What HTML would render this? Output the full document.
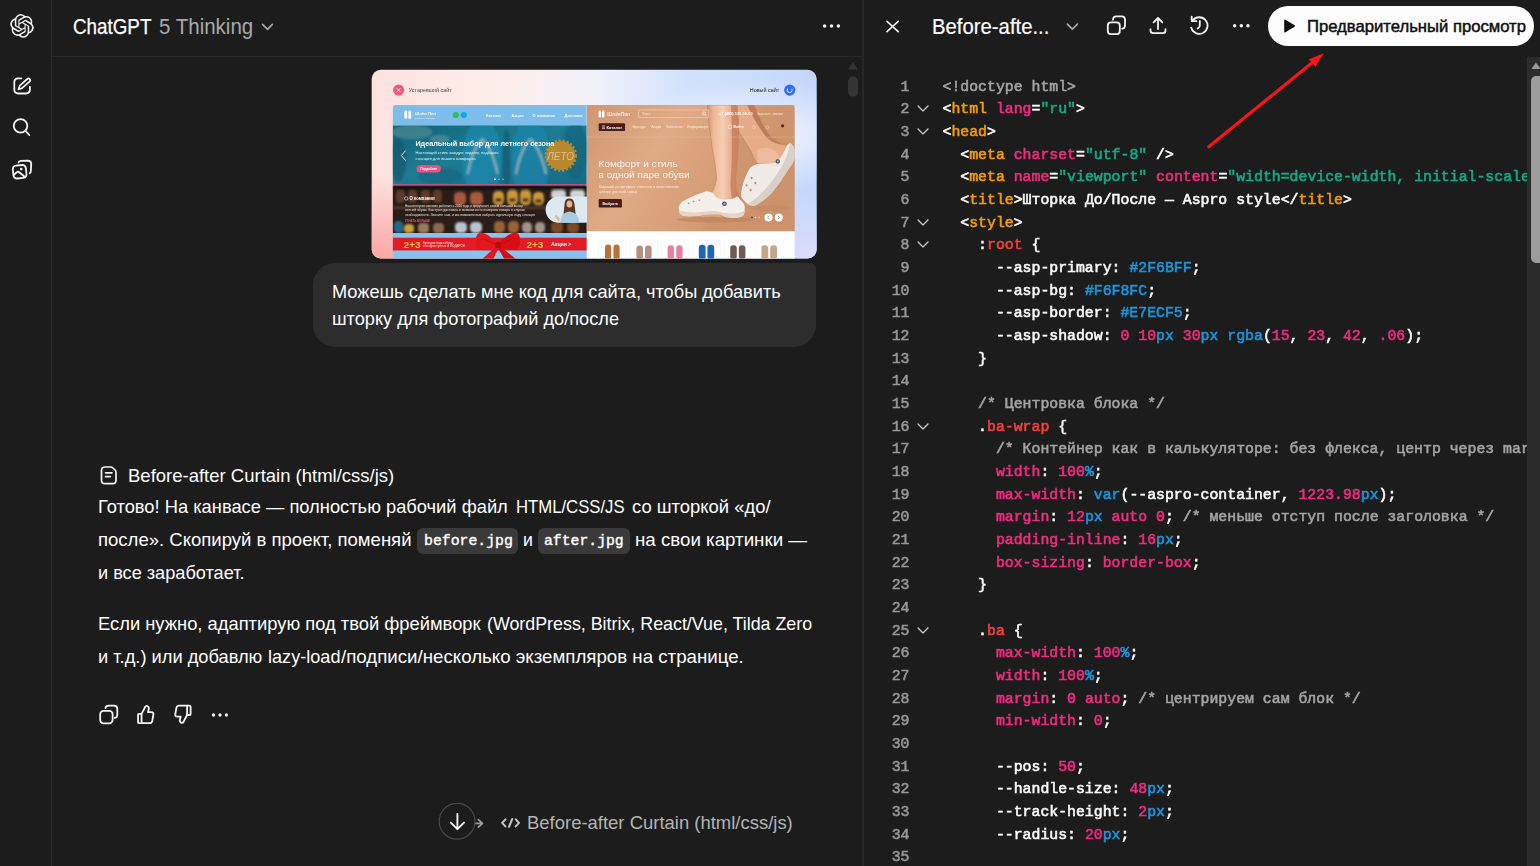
<!DOCTYPE html>
<html lang="ru">
<head>
<meta charset="utf-8">
<title>ChatGPT — Before-after Curtain</title>
<style>
*{box-sizing:border-box;margin:0;padding:0}
html,body{width:1540px;height:866px;overflow:hidden;background:#1c1c1c}
body{position:relative;font-family:"Liberation Sans",sans-serif;color:#fff;-webkit-font-smoothing:antialiased}
.abs{position:absolute}
.t{position:absolute;white-space:nowrap;line-height:1;transform-origin:0 0}
svg{position:absolute;overflow:visible}
.ico path,.ico rect,.ico circle,.ico line,.ico polyline{fill:none;stroke:#f3f3f3;stroke-width:1.9;stroke-linecap:round;stroke-linejoin:round}
/* layout lines */
#sideline{left:51px;top:0;width:1px;height:866px;background:#2b2b2b}
#headline{left:52px;top:56px;width:810px;height:1px;background:#282828}
#midline{left:862px;top:0;width:2px;height:866px;background:#272727}
/* bubble */
#bubble{left:312.7px;top:263.4px;width:503.7px;height:83.6px;border-radius:22px 6px 22px 22px;background:#2d2d2d}
/* code */
.cl{position:absolute;left:863px;width:664px;height:23px;overflow:hidden;white-space:pre;font-family:"Liberation Mono",monospace;font-size:14.83px;line-height:23px;font-weight:400;-webkit-text-stroke:0.58px currentColor;color:#f2f2f2}
.ln{position:absolute;left:0;width:46.5px;text-align:right;color:#969696}
.ct{position:absolute;left:79.5px}
.fold{left:53.6px;top:7.2px;width:12px;height:7px}
.fold path{fill:none;stroke:#c6c6c6;stroke-width:1.6;stroke-linecap:round;stroke-linejoin:round}
.w{color:#fafafa}.g{color:#a3a3a3}.a{color:#f02c7e}.s{color:#16ab87}.n{color:#f02c7e}.u{color:#1b96dc}.r{color:#f4403e}
.tg{color:#f49b08}
/* inline code chips */
.chip{position:absolute;height:25.5px;border-radius:6px;background:#3a3a3a}
#pbtn{left:1268px;top:5.5px;width:265.5px;height:40.5px;border-radius:21px;background:#fdfdfd}
.mono{font-family:"Liberation Mono",monospace;font-weight:400;-webkit-text-stroke:0.4px currentColor}
</style>
</head>
<body>

<!-- separators -->
<div class="abs" id="sideline"></div>
<div class="abs" id="headline"></div>
<div class="abs" id="midline"></div>

<!-- thumbnail -->
<svg id="shot" style="left:0;top:0;width:1540px;height:866px" viewBox="0 0 1540 866" font-family="Liberation Sans, sans-serif">
<defs>
  <clipPath id="shotclip"><rect x="371.7" y="69.8" width="445" height="188.7" rx="9"/></clipPath>
  <clipPath id="oldclip"><path d="M392.6 108 Q392.6 105 395.6 105 H586.8 V258.5 H392.6 Z"/></clipPath>
  <clipPath id="banclip"><rect x="392.6" y="125.6" width="194.2" height="58.6"/></clipPath>
  <clipPath id="newclip"><path d="M586.8 105 H791.8 Q794.8 105 794.8 108 V258.5 H586.8 Z"/></clipPath>
  <linearGradient id="bgG" x1="0" y1="0" x2="1" y2="0">
    <stop offset="0" stop-color="#fde2de"/><stop offset="0.28" stop-color="#fdeeea"/><stop offset="0.5" stop-color="#f1f1fa"/><stop offset="0.7" stop-color="#d2e2fc"/><stop offset="1" stop-color="#c3d6fb"/>
  </linearGradient>
  <radialGradient id="bgP" cx="0.02" cy="1" r="0.45"><stop offset="0" stop-color="#fba5a5"/><stop offset="1" stop-color="#fba5a5" stop-opacity="0"/></radialGradient>
  <radialGradient id="bgW" cx="0.86" cy="0.35" r="0.3"><stop offset="0" stop-color="#f3f6ff"/><stop offset="1" stop-color="#f3f6ff" stop-opacity="0"/></radialGradient>
  <radialGradient id="bgL" cx="1" cy="1" r="0.35"><stop offset="0" stop-color="#dcdcfc"/><stop offset="1" stop-color="#dcdcfc" stop-opacity="0"/></radialGradient>
  <linearGradient id="tealG" x1="0" y1="0" x2="1" y2="1">
    <stop offset="0" stop-color="#15647b"/><stop offset="0.45" stop-color="#1c7b93"/><stop offset="1" stop-color="#156a82"/>
  </linearGradient>
  <linearGradient id="heroG" x1="0" y1="0" x2="1" y2="0.4">
    <stop offset="0" stop-color="#d09670"/><stop offset="0.4" stop-color="#dfaa85"/><stop offset="0.75" stop-color="#d59d77"/><stop offset="1" stop-color="#cf9670"/>
  </linearGradient>
  <linearGradient id="legG" x1="0" y1="0" x2="1" y2="0">
    <stop offset="0" stop-color="#d48f6c"/><stop offset="0.18" stop-color="#eeb896"/><stop offset="0.45" stop-color="#f7ceb2"/><stop offset="0.8" stop-color="#e2a583"/><stop offset="1" stop-color="#c98462"/>
  </linearGradient>
  <filter id="soft" x="-2%" y="-2%" width="104%" height="104%"><feGaussianBlur stdDeviation="0.55"/></filter>
  <filter id="soft2" x="-5%" y="-5%" width="110%" height="110%"><feGaussianBlur stdDeviation="1.2"/></filter>
</defs>
<g clip-path="url(#shotclip)">
  <rect x="371" y="69" width="447" height="191" fill="url(#bgG)"/>
  <rect x="371" y="69" width="447" height="191" fill="url(#bgP)"/>
  <rect x="371" y="69" width="447" height="191" fill="url(#bgW)"/>
  <rect x="371" y="69" width="447" height="191" fill="url(#bgL)"/>
  <g filter="url(#soft)">
  <!-- labels -->
  <circle cx="398.6" cy="90.1" r="5.5" fill="#f5557b"/>
  <path d="M396.8 88.3 L400.4 91.9 M400.4 88.3 L396.8 91.9" stroke="#fff" stroke-width="0.9" fill="none"/>
  <text x="408.8" y="91.6" font-size="4.9" fill="#4a4a4a" textLength="43" lengthAdjust="spacingAndGlyphs">Устаревший сайт</text>
  <text x="749.8" y="91.8" font-size="4.9" fill="#222" textLength="29.4" lengthAdjust="spacingAndGlyphs">Новый сайт</text>
  <circle cx="789.7" cy="90.1" r="5.6" fill="#2e6cff"/>
  <path d="M787.4 88.6 V90.6 Q787.4 92.6 789.7 92.6 Q792 92.6 792 90.6 V88.6" stroke="#fff" stroke-width="0.9" fill="none"/>

  <!-- OLD SITE -->
  <g clip-path="url(#oldclip)">
    <rect x="392.6" y="105" width="194.2" height="21" fill="#7ebde9"/>
    <rect x="404.4" y="110.6" width="2.8" height="8.2" rx="1.4" fill="#fff"/><rect x="408.4" y="110.6" width="2.8" height="8.2" rx="1.4" fill="#fff"/>
    <text x="415" y="115.2" font-size="4.2" fill="#f4faff" font-weight="700">Шлёп Пол</text>
    <text x="415" y="118.6" font-size="2.4" fill="#d9ecfa">интернет-магазин</text>
    <circle cx="455.8" cy="115" r="3.1" fill="#20c35c"/><circle cx="463.9" cy="115" r="3.1" fill="#18a3ea"/>
    <g font-size="3.9" fill="#f4faff" font-weight="700">
      <text x="486" y="117.2">Каталог</text><text x="511.6" y="117.2">Акции</text><text x="532.6" y="117.2">О компании</text><text x="564.6" y="117.2">Доставка</text>
    </g>
    <!-- banner -->
    <rect x="392.6" y="125.6" width="194.2" height="59" fill="url(#tealG)"/>
    <g clip-path="url(#banclip)"><g filter="url(#soft2)">
      <ellipse cx="412" cy="132" rx="20" ry="7" fill="#6f9b9e" opacity="0.45"/>
      <ellipse cx="440" cy="139" rx="10" ry="4" fill="#7fa3a3" opacity="0.4"/>
      <ellipse cx="398" cy="160" rx="8" ry="22" fill="#0e4f63" opacity="0.55"/>
      <ellipse cx="482" cy="160" rx="19.5" ry="42" fill="#1f8db6" opacity="0.6"/>
      <ellipse cx="530.5" cy="160" rx="19.5" ry="42" fill="#1d87b0" opacity="0.6"/>
      <ellipse cx="506.4" cy="160" rx="4" ry="30" fill="#0d5269" opacity="0.6"/>
      <path d="M482 139 Q472 150 467.6 174 M482 139 Q493 150 497.6 174" stroke="#9fb9bb" stroke-width="2.6" fill="none" opacity="0.75"/>
      <path d="M530.5 139 Q520 150 516 174 M530.5 139 Q541 150 546 174" stroke="#9fb9bb" stroke-width="2.6" fill="none" opacity="0.75"/>
      <ellipse cx="575" cy="150" rx="12" ry="28" fill="#12607a" opacity="0.6"/>
      <ellipse cx="440" cy="176" rx="22" ry="8" fill="#14667f" opacity="0.6"/>
    </g></g>
    <!-- gold badge -->
    <circle cx="560.8" cy="155.6" r="14.4" fill="#b8892f"/>
    <circle cx="560.8" cy="155.6" r="15" fill="none" stroke="#b8892f" stroke-width="2.4" stroke-dasharray="2.2 1.8"/>
    <text x="547" y="159.6" font-size="10" font-style="italic" fill="#d9c08a" textLength="27" lengthAdjust="spacingAndGlyphs">ЛЕТО</text>
    <path d="M405.6 150.6 L401.4 155.6 L405.6 160.6" stroke="#eaf6fb" stroke-width="0.9" fill="none"/>
    <text x="415.4" y="146.2" font-size="7.1" font-weight="700" fill="#fff" textLength="139" lengthAdjust="spacingAndGlyphs">Идеальный выбор для летнего сезона</text>
    <text x="415.6" y="154.4" font-size="3.7" fill="#e6f3f8" textLength="83" lengthAdjust="spacingAndGlyphs">Настоящий стиль каждую неделю, подборка</text>
    <text x="415.6" y="160.2" font-size="3.7" fill="#e6f3f8" textLength="60" lengthAdjust="spacingAndGlyphs">сланцев для вашего комфорта</text>
    <rect x="416.5" y="165.2" width="24.4" height="7.3" rx="3.65" fill="#f1517f"/>
    <text x="420.6" y="170.2" font-size="3.5" fill="#fff" font-weight="700" textLength="16.4" lengthAdjust="spacingAndGlyphs">Подробнее</text>
    <circle cx="495" cy="179.2" r="0.9" fill="#fff"/><circle cx="499" cy="179.2" r="0.8" fill="#8cc3d4"/><circle cx="503" cy="179.2" r="0.8" fill="#8cc3d4"/>
    <rect x="392.6" y="184.2" width="194.2" height="1.9" fill="#de4f7f"/>
    <!-- shelf -->
    <rect x="392.6" y="186.1" width="194.2" height="47" fill="#2a1c16"/>
    <g filter="url(#soft2)">
      <rect x="392.6" y="186.1" width="194.2" height="3" fill="#120b08"/>
      <rect x="392.6" y="206.5" width="155" height="2.6" fill="#5a4232" opacity="0.8"/>
      <g fill="#5e3b2a"><rect x="396" y="190" width="9" height="13" rx="4"/><rect x="408" y="190" width="9" height="13" rx="4"/><rect x="421" y="190" width="9" height="13" rx="4"/><rect x="433" y="190" width="9" height="13" rx="4"/></g>
      <g fill="#a9583c"><rect x="454" y="192" width="12" height="13" rx="4.5"/><rect x="470" y="192" width="13" height="13" rx="4.5"/></g>
      <g fill="#c9993a"><rect x="493" y="191" width="11" height="14" rx="4.5"/><rect x="507" y="190" width="11" height="15" rx="4.5"/><rect x="520" y="190" width="11" height="15" rx="4.5"/><rect x="533" y="192" width="11" height="13" rx="4.5"/></g>
      <g fill="#5a3a1c"><rect x="495" y="198" width="7" height="4" rx="2"/><rect x="509" y="198" width="7" height="4" rx="2"/><rect x="522" y="198" width="7" height="4" rx="2"/><rect x="535" y="199" width="7" height="4" rx="2"/></g>
      <g fill="#cfd4d8"><rect x="551" y="190" width="15" height="9" rx="4"/><rect x="570" y="190" width="15" height="9" rx="4"/></g>
      <g><rect x="394" y="221" width="9" height="12" rx="4" fill="#1f6b8e"/><rect x="404" y="224" width="10" height="9" rx="4" fill="#c9a33c"/><rect x="418" y="223" width="11" height="10" rx="4" fill="#9a7a5c"/><rect x="433" y="223" width="11" height="10" rx="4" fill="#8a6a50"/></g>
      <g fill="#b9c4cf"><rect x="455" y="222" width="12" height="11" rx="4.5"/><rect x="470" y="222" width="12" height="11" rx="4.5"/></g>
      <g fill="#9a6238"><rect x="494" y="221" width="11" height="12" rx="4.5"/><rect x="508" y="221" width="11" height="12" rx="4.5"/></g>
      <g fill="#9f958c"><rect x="522" y="222" width="10" height="11" rx="4.5"/><rect x="535" y="222" width="10" height="11" rx="4.5"/></g>
      <g fill="#7a4a28"><rect x="551" y="222" width="12" height="11" rx="4.5"/><rect x="567" y="222" width="12" height="11" rx="4.5"/></g>
    </g>
    <circle cx="406.2" cy="198.5" r="1.7" fill="none" stroke="#fff" stroke-width="0.6"/>
    <text x="409.6" y="200.3" font-size="4.6" font-weight="700" fill="#fff" textLength="25" lengthAdjust="spacingAndGlyphs">О компании</text>
    <g font-size="3.2" fill="#e9e2dc">
      <text x="405" y="206.6" textLength="118" lengthAdjust="spacingAndGlyphs">Наш интернет-магазин работает с 2010 года и предлагает самый большой выбор</text>
      <text x="405" y="211.1" textLength="120" lengthAdjust="spacingAndGlyphs">летней обуви. Быстрая доставка и возможность возврата товара в случае</text>
      <text x="405" y="215.6" textLength="130" lengthAdjust="spacingAndGlyphs">необходимости. Звоните нам, и мы поможем вам выбрать идеальную пару сланцев</text>
    </g>
    <text x="405" y="222.4" font-size="3.4" font-weight="700" fill="#f1517f" textLength="25" lengthAdjust="spacingAndGlyphs">УЗНАТЬ БОЛЬШЕ</text>
    <!-- woman oval -->
    <rect x="545.6" y="196.6" width="52" height="26.2" rx="13.1" fill="#dde9f1"/>
    <path d="M564.6 203.2 Q565 198.2 569.4 198.4 Q573.8 198.4 574.4 203.6 L575.6 214 L563.6 214 Z" fill="#5b3626"/>
    <ellipse cx="569.4" cy="204" rx="2.9" ry="3.6" fill="#e7b39a"/>
    <path d="M560.4 222.8 Q560.8 212.4 569.4 211.6 Q578.4 212.4 579.4 222.8 Z" fill="#a7cbe0"/>
    <path d="M556.2 214.6 L560.6 219.4 L558.4 221.4 L554.6 216.4 Z" fill="#e7b39a"/>
    <!-- bottom ribbon -->
    <rect x="392.6" y="233.1" width="194.2" height="26" fill="#86c4ef"/>
    <rect x="392.6" y="237.7" width="194.2" height="12.8" fill="#e11f25"/>
    <text x="403.6" y="248.2" font-size="9.4" font-weight="700" fill="#f6c43a" textLength="17" lengthAdjust="spacingAndGlyphs">2+3</text>
    <text x="422.8" y="243.6" font-size="3" fill="#ffe9e4" textLength="30" lengthAdjust="spacingAndGlyphs">Купи две пары обуви</text>
    <text x="422.8" y="247.4" font-size="3" fill="#ffe9e4" textLength="42" lengthAdjust="spacingAndGlyphs">и получи третью в ПОДАРОК</text>
    <text x="526.4" y="248.2" font-size="9.4" font-weight="700" fill="#f6c43a" textLength="17" lengthAdjust="spacingAndGlyphs">2+3</text>
    <text x="551" y="246.4" font-size="5" font-weight="700" fill="#fff" textLength="20.4" lengthAdjust="spacingAndGlyphs">Акция &gt;</text>
    <!-- bow -->
    <path d="M497.6 243.6 Q484 229 477.4 234.2 Q473.4 241 478.6 249.8 Q488 251 497.6 246.6 Z" fill="#e3161b"/>
    <path d="M498.6 243.6 Q512 229 518.6 234.2 Q522.6 241 517.4 249.8 Q508 251 498.6 246.6 Z" fill="#d90f15"/>
    <path d="M496.4 246 L479 262 L492 262 L498.4 248 Z" fill="#e3161b"/>
    <path d="M499.6 246 L519.6 262 L506 262 L498 248 Z" fill="#d20d13"/>
    <ellipse cx="498.1" cy="245" rx="3.1" ry="3.3" fill="#b90b11"/>
    <path d="M482 238 Q489 241 495 244 M514 238 Q507 241 501 244" stroke="#a80a10" stroke-width="0.8" fill="none" opacity="0.8"/>
  </g>

  <!-- NEW SITE -->
  <g clip-path="url(#newclip)">
    <rect x="586.8" y="105" width="208" height="126.5" fill="url(#heroG)"/>
    <path d="M737 105 H795 V231.4 H700 Q740 180 737 105 Z" fill="#c68d66" opacity="0.35" filter="url(#soft2)"/>
    <rect x="586.8" y="231.4" width="208" height="28" fill="#ffffff"/>
    <!-- legs -->
    <g filter="url(#soft)">
      <ellipse cx="715" cy="219.6" rx="38" ry="3" fill="#b97d58" opacity="0.55"/>
      <ellipse cx="770" cy="208" rx="22" ry="3" fill="#bd835e" opacity="0.35"/>
      <!-- back leg -->
      <path d="M730 105 L754.2 105 Q757 114 762 123.4 Q766 131 771.3 137.4 Q778 143 786 145.4 L790 152 L778 166 L757.3 164 Q753 157 751 151.4 Q744 140 738.6 131 Z" fill="#e6ab89" stroke="#bb7856" stroke-width="0.7" stroke-opacity="0.7"/>
      <path d="M747 105 L754.2 105 Q757 114 762 123.4 Q766 131 771.3 137.4 Q777 142.4 784 145 Q774 144 767 138 Q757 126 747 105 Z" fill="#bf7c5a"/>
      <path d="M757 150 Q764 146 772 149 Q778 152 780 158 L770 164.4 L757.3 163 Z" fill="#efbb9c"/>
      <!-- back shoe -->
      <path d="M790 142.9 Q794 145 794.8 151.4 L794.8 158 Q793 164 788.5 169 Q781 182 771.3 193.5 Q763 201.6 754.2 206 Q747.6 205.6 743.3 199.8 Q740.6 197 741 193.5 Q743 180 749.5 168.6 Q752.6 165 757.3 163.9 Q768 164.4 776 162.4 Q783 156 787 145.2 Z" fill="#f0ebe6"/>
      <path d="M790 142.9 Q794 145 794.8 151.4 L794.8 158 Q793 164 788.5 169 Q781 182 771.3 193.5 Q763 201.6 754.2 206 Q751 206 748 204 Q760 196 768 186 Q778 174 784 162 Q789 152 790 142.9 Z" fill="#d9d0c9"/>
      <circle cx="777.8" cy="161.4" r="2.2" fill="#3c4a66"/><circle cx="777.8" cy="161.4" r="1.1" fill="#9fb2c8"/>
      <g fill="#b08a74"><ellipse cx="751.6" cy="178" rx="1" ry="1.2"/><ellipse cx="755.4" cy="183" rx="1" ry="1.2"/><ellipse cx="750.6" cy="190" rx="1" ry="1.2"/><ellipse cx="746.6" cy="185.4" rx="0.9" ry="1.1"/></g>
      <!-- front leg -->
      <path d="M707.4 105 L737 105 Q738.8 120 738.6 131 Q738.4 150 737 162.4 Q735.6 176 735.5 186 Q736.4 192 739.4 196.6 L741 203 L716 204 L709 196 Q711.6 192 712.9 190.4 Q716.6 182 716.8 178 Q715 160 712 146.8 Q708.6 126 707.4 105 Z" fill="url(#legG)" stroke="#c07d5a" stroke-width="0.7" stroke-opacity="0.7"/>
      <path d="M731 105 L737 105 Q738.8 120 738.6 131 Q738.4 150 737 162.4 Q735.6 176 735.5 186 Q736.4 192 739.4 196.6 L741 203 L733 203 Q730 192 730.6 180 Q733 150 731 105 Z" fill="#c27f5e" opacity="0.8"/>
      <!-- front shoe -->
      <path d="M678.6 207.6 Q679.4 202.4 685.6 199.8 Q695 194.6 705.9 191.2 Q709.4 190.8 713.6 193.5 Q716 198.4 722 199.4 Q732 200.4 737 196.6 Q739.4 197.2 740.1 199.8 Q744.6 203 744.8 207.6 Q745 212 743.3 215.4 Q740 218 732.4 217.7 Q726 217.6 723 216 Q720 214.2 716.8 214.6 Q709 214.4 701.2 215.4 Q694 216.4 685.6 216.1 Q680.4 215.4 679.4 212.2 Z" fill="#f3efea"/>
      <path d="M679 210.4 Q690 213.4 702 212 Q712 210.4 718 211.4 Q724 213.4 732 213.6 Q740 213.4 744.6 210.6 Q745 213 743.3 215.4 Q740 218 732.4 217.7 Q726 217.6 723 216 Q720 214.2 716.8 214.6 Q709 214.4 701.2 215.4 Q694 216.4 685.6 216.1 Q680.4 215.4 679.4 212.2 Z" fill="#e5d3c6"/>
      <path d="M701.2 215.4 Q709 214.4 716.8 214.6 Q720 214.2 723 216 L722 217.4 Q712 216 702 217.2 Z" fill="#d6a383"/>
      <circle cx="724.4" cy="203.8" r="2.3" fill="#34466e"/><circle cx="724.4" cy="203.8" r="1.2" fill="#9bb4cc"/>
      <g fill="#b99c8c"><ellipse cx="688.6" cy="203.2" rx="1" ry="0.8"/><ellipse cx="693.6" cy="201.4" rx="1" ry="0.8"/><ellipse cx="699.4" cy="200.2" rx="1" ry="0.8"/></g>
    </g>
    <!-- header -->
    <rect x="598.6" y="110.4" width="2.4" height="7" rx="1.2" fill="#fff"/><rect x="602" y="110.4" width="2.4" height="7" rx="1.2" fill="#fff"/>
    <text x="607.2" y="116.4" font-size="5" font-weight="700" fill="#f9ece4" textLength="23" lengthAdjust="spacingAndGlyphs">ШлёпПол</text>
    <rect x="638.6" y="109.8" width="70" height="7.8" rx="1" fill="none" stroke="#f0d5c4" stroke-width="0.6"/>
    <text x="642" y="115" font-size="3" fill="#f5dfd0">Поиск</text>
    <circle cx="704" cy="113.4" r="1.5" fill="none" stroke="#fff" stroke-width="0.6"/><path d="M705.1 114.5 L706.4 115.8" stroke="#fff" stroke-width="0.6"/>
    <text x="719" y="115.2" font-size="3.2" font-weight="700" fill="#fff" textLength="33.6" lengthAdjust="spacingAndGlyphs">+7 (495) 120-00-00</text>
    <text x="757" y="115.2" font-size="3.1" fill="#f7e6db" textLength="26" lengthAdjust="spacingAndGlyphs">Заказать звонок</text>
    <rect x="598.7" y="123.2" width="26.4" height="7.9" rx="1.2" fill="#4a1f17"/>
    <path d="M602 125.8 H605 M602 127.2 H605 M602 128.6 H605" stroke="#fff" stroke-width="0.6"/>
    <text x="606.6" y="128.6" font-size="3.7" font-weight="700" fill="#fff" textLength="15.6" lengthAdjust="spacingAndGlyphs">Каталог</text>
    <g font-size="3.1" fill="#f9e9de">
      <text x="632.4" y="128.2" textLength="13.6" lengthAdjust="spacingAndGlyphs">Бренды</text><text x="651.2" y="128.2" textLength="10" lengthAdjust="spacingAndGlyphs">Акции</text><text x="666" y="128.2" textLength="16.4" lengthAdjust="spacingAndGlyphs">Компания</text><text x="687" y="128.2" textLength="21.4" lengthAdjust="spacingAndGlyphs">Информация</text>
      <text x="733.6" y="128.2" font-weight="700" fill="#fff" textLength="10" lengthAdjust="spacingAndGlyphs">Войти</text>
    </g>
    <rect x="728.4" y="125" width="3" height="3.6" rx="0.6" fill="none" stroke="#fff" stroke-width="0.5"/>
    <circle cx="754" cy="127" r="1.4" fill="none" stroke="#f4dccd" stroke-width="0.5"/><circle cx="767.4" cy="127.4" r="1.4" fill="none" stroke="#f4dccd" stroke-width="0.5"/>
    <circle cx="782.6" cy="125.8" r="1.6" fill="#5a2a1c"/>
    <rect x="586.8" y="136.8" width="208" height="0.5" fill="#ecc4a8" opacity="0.7"/>
    <!-- hero text -->
    <text x="598.6" y="166.6" font-size="9.2" fill="#fdf1ea" textLength="79" lengthAdjust="spacingAndGlyphs">Комфорт и стиль</text>
    <text x="598.6" y="177.8" font-size="9.2" fill="#fdf1ea" textLength="91" lengthAdjust="spacingAndGlyphs">в одной паре обуви</text>
    <text x="599" y="187.6" font-size="3.1" fill="#fbeadf" textLength="80" lengthAdjust="spacingAndGlyphs">Широкий ассортимент стильных и качественных</text>
    <text x="599" y="192.9" font-size="3.1" fill="#fbeadf" textLength="38" lengthAdjust="spacingAndGlyphs">шлёпок для всей семьи</text>
    <rect x="598.7" y="199.1" width="23.2" height="8.5" rx="1.2" fill="#4a1c15"/>
    <text x="602.6" y="204.8" font-size="3.9" font-weight="700" fill="#fff" textLength="15.4" lengthAdjust="spacingAndGlyphs">Выбрать</text>
    <circle cx="752" cy="217.4" r="0.8" fill="#5a3a2a"/><circle cx="755.6" cy="217.4" r="0.7" fill="#f6e6dc"/><circle cx="759" cy="217.4" r="0.7" fill="#f6e6dc"/>
    <circle cx="768.5" cy="217.5" r="4" fill="#fff"/><circle cx="778.8" cy="217.5" r="4" fill="#fff"/>
    <path d="M769.3 215.9 L767.7 217.5 L769.3 219.1 M778 215.9 L779.6 217.5 L778 219.1" stroke="#6a4a3a" stroke-width="0.6" fill="none"/>
    <!-- products -->
    <g fill="none" stroke="#f0eeee" stroke-width="0.5">
      <rect x="598.6" y="240" width="27.4" height="22" rx="1.5"/><rect x="630.2" y="240" width="27.4" height="22" rx="1.5"/><rect x="661.6" y="240" width="27.4" height="22" rx="1.5"/><rect x="693" y="240" width="27.4" height="22" rx="1.5"/><rect x="724.4" y="240" width="27.4" height="22" rx="1.5"/><rect x="755.8" y="240" width="27.4" height="22" rx="1.5"/>
    </g>
    <g>
      <g fill="#b87238"><rect x="605" y="244.6" width="6.2" height="15" rx="3"/><rect x="613.4" y="244.6" width="6.2" height="15" rx="3"/></g>
      <g fill="#b39080"><rect x="636.4" y="245.6" width="6.6" height="14" rx="3"/><rect x="645" y="245.6" width="6.6" height="14" rx="3"/></g>
      <g fill="#e97f9f"><rect x="667.6" y="245.2" width="6.4" height="14" rx="3"/><rect x="676.2" y="245.2" width="6.4" height="14" rx="3"/></g>
      <g fill="#1b66b9"><rect x="698.8" y="244.8" width="6.8" height="15" rx="3"/><rect x="707.4" y="244.8" width="6.8" height="15" rx="3"/></g>
      <g fill="#6c5b57"><rect x="730.2" y="245.2" width="6.6" height="14" rx="3"/><rect x="738.8" y="245.2" width="6.6" height="14" rx="3"/></g>
      <g fill="#c5a588"><rect x="761.4" y="245.2" width="6.8" height="14" rx="3"/><rect x="770.2" y="245.2" width="6.8" height="14" rx="3"/></g>
    </g>
  </g>
  </g>
</g>
</svg>


<!-- user bubble -->
<div class="abs" id="bubble"></div>

<!-- inline code chips -->
<div class="chip" style="left:416.8px;top:528.3px;width:101px"></div>
<div class="chip" style="left:538.4px;top:528.3px;width:91.6px"></div>

<!-- preview button -->
<div class="abs" id="pbtn"></div>

<!-- texts -->
<div class="t" id="h-chatgpt" style="left:73.2px;top:15.5px;font-size:22px;color:#ffffff;transform:scaleX(0.8549);-webkit-text-stroke:0.25px #fff">ChatGPT</div>
<div class="t" id="h-think" style="left:159.0px;top:15.5px;font-size:22px;color:#a9a9a9;transform:scaleX(0.9317);">5 Thinking</div>
<div class="t" id="u1" style="left:332.0px;top:282.5px;font-size:18.4px;color:#fff;transform:scaleX(0.9885);">Можешь сделать мне код для сайта, чтобы добавить</div>
<div class="t" id="u2" style="left:332.0px;top:310.4px;font-size:18.4px;color:#fff;transform:scaleX(0.9887);">шторку для фотографий до/после</div>
<div class="t" id="a0" style="left:128.0px;top:466.7px;font-size:18.4px;color:#fff;transform:scaleX(1.0060);">Before-after Curtain (html/css/js)</div>
<div class="t" id="a1a" style="left:97.7px;top:497.6px;font-size:18.4px;color:#fff;transform:scaleX(0.9954);">Готово! На канвасе — полностью рабочий файл</div>
<div class="t" id="a1b" style="left:515.8px;top:497.6px;font-size:18.4px;color:#fff;transform:scaleX(0.9083);">HTML/CSS/JS</div>
<div class="t" id="a1c" style="left:632.0px;top:497.6px;font-size:18.4px;color:#fff;transform:scaleX(1.0020);">со шторкой «до/</div>
<div class="t" id="a2a" style="left:97.7px;top:530.5px;font-size:18.4px;color:#fff;transform:scaleX(1.0074);">после». Скопируй в проект, поменяй</div>
<div class="t mono" id="c1" style="left:423.6px;top:534.4px;font-size:14.8px;color:#fff;transform:scaleX(1.0012);">before.jpg</div>
<div class="t" id="a2b" style="left:522.8px;top:530.5px;font-size:18.4px;color:#fff;transform:scaleX(0.9629);">и</div>
<div class="t mono" id="c2" style="left:544.3px;top:534.4px;font-size:14.8px;color:#fff;transform:scaleX(0.9972);">after.jpg</div>
<div class="t" id="a2c" style="left:635.0px;top:530.5px;font-size:18.4px;color:#fff;transform:scaleX(1.0175);">на свои картинки —</div>
<div class="t" id="a3" style="left:97.7px;top:563.6px;font-size:18.4px;color:#fff;transform:scaleX(0.9864);">и все заработает.</div>
<div class="t" id="b1a" style="left:97.7px;top:614.8px;font-size:18.4px;color:#fff;transform:scaleX(0.9974);">Если нужно, адаптирую под твой фреймворк</div>
<div class="t" id="b1b" style="left:486.8px;top:614.8px;font-size:18.4px;color:#fff;transform:scaleX(0.9698);">(WordPress, Bitrix, React/Vue, Tilda Zero</div>
<div class="t" id="b2a" style="left:97.7px;top:647.6px;font-size:18.4px;color:#fff;transform:scaleX(0.9927);">и т.д.) или добавлю</div>
<div class="t" id="b2b" style="left:268.0px;top:647.6px;font-size:18.4px;color:#fff;transform:scaleX(0.9849);">lazy-load</div>
<div class="t" id="b2c" style="left:341.3px;top:647.6px;font-size:18.4px;color:#fff;transform:scaleX(1.0162);">/подписи/несколько экземпляров на странице.</div>
<div class="t" id="bt" style="left:527.0px;top:814.4px;font-size:18.4px;color:#b4b4b4;transform:scaleX(1.0041);">Before-after Curtain (html/css/js)</div>
<div class="t" id="rt" style="left:932.3px;top:15.5px;font-size:22px;color:#fff;transform:scaleX(0.9230);-webkit-text-stroke:0.2px #fff">Before-afte...</div>
<div class="t" id="pt" style="left:1306.7px;top:18.1px;font-size:16.2px;color:#0d0d0d;transform:scaleX(1.0284);-webkit-text-stroke:0.45px #0d0d0d">Предварительный просмотр</div>

<!-- scrollbars -->
<div class="abs" style="left:1527px;top:57px;width:13px;height:809px;background:#2b2b2b"></div>
<div class="abs" style="left:1531px;top:76px;width:9px;height:187px;border-radius:5px 0 0 5px;background:#9c9c9c"></div>

<!-- icons -->
<svg id="icons" style="left:0;top:0;width:1540px;height:866px" viewBox="0 0 1540 866">
<g fill="none" stroke="#f4f4f4" stroke-width="1.8" stroke-linecap="round" stroke-linejoin="round">
  <!-- logo -->
  <path id="oa" transform="translate(10.2 14.1) scale(0.983)" fill="#f4f4f4" stroke="none" d="M22.2819 9.8211a5.9847 5.9847 0 0 0-.5157-4.9108 6.0462 6.0462 0 0 0-6.5098-2.9A6.0651 6.0651 0 0 0 4.9807 4.1818a5.9847 5.9847 0 0 0-3.9977 2.9 6.0462 6.0462 0 0 0 .7427 7.0966 5.98 5.98 0 0 0 .511 4.9107 6.051 6.051 0 0 0 6.5146 2.9001A5.9847 5.9847 0 0 0 13.2599 24a6.0557 6.0557 0 0 0 5.7718-4.2058 5.9894 5.9894 0 0 0 3.9977-2.9001 6.0557 6.0557 0 0 0-.7475-7.0729zm-9.022 12.6081a4.4755 4.4755 0 0 1-2.8764-1.0408l.1419-.0804 4.7783-2.7582a.7948.7948 0 0 0 .3927-.6813v-6.7369l2.02 1.1686a.071.071 0 0 1 .038.052v5.5826a4.504 4.504 0 0 1-4.4945 4.4944zm-9.6607-4.1254a4.4708 4.4708 0 0 1-.5346-3.0137l.142.0852 4.783 2.7582a.7712.7712 0 0 0 .7806 0l5.8428-3.3685v2.3324a.0804.0804 0 0 1-.0332.0615L9.74 19.9502a4.4992 4.4992 0 0 1-6.1408-1.6464zM2.3408 7.8956a4.485 4.485 0 0 1 2.3655-1.9728V11.6a.7664.7664 0 0 0 .3879.6765l5.8144 3.3543-2.0201 1.1685a.0757.0757 0 0 1-.071 0l-4.8303-2.7865A4.504 4.504 0 0 1 2.3408 7.872zm16.5963 3.8558L13.1038 8.364 15.1192 7.2a.0757.0757 0 0 1 .071 0l4.8303 2.7913a4.4944 4.4944 0 0 1-.6765 8.1042v-5.6772a.79.79 0 0 0-.407-.667zm2.0107-3.0231l-.142-.0852-4.7735-2.7818a.7759.7759 0 0 0-.7854 0L9.409 9.2297V6.8974a.0662.0662 0 0 1 .0284-.0615l4.8303-2.7866a4.4992 4.4992 0 0 1 6.6802 4.66zM8.3065 12.863l-2.02-1.1638a.0804.0804 0 0 1-.038-.0567V6.0742a4.4992 4.4992 0 0 1 7.3757-3.4537l-.142.0805L8.704 5.459a.7948.7948 0 0 0-.3927.6813zm1.0976-2.3654l2.602-1.4998 2.6069 1.4998v2.9994l-2.5974 1.4997-2.6067-1.4997Z"/>
  <!-- new chat (edit) -->
  <path d="M21.4 78.3 H18.2 Q14.3 78.3 14.3 82.2 V89.6 Q14.3 93.5 18.2 93.5 H26 Q29.9 93.5 29.9 89.6 V86.8"/>
  <path d="M29.55 81.6 A1.7 1.7 0 0 0 27.25 79 L19.8 85.6 L18.4 89.4 L22.05 88.2 Z" stroke-width="1.7"/>
  <!-- search -->
  <circle cx="20.55" cy="125.85" r="6.8"/>
  <path d="M25.5 130.8 L29.3 135"/>
  <!-- library -->
  <g transform="rotate(-6 19.65 171.75)">
    <rect x="13.1" y="165.3" width="13.1" height="12.9" rx="3.5"/>
  </g>
  <path d="M13.9 174.7 L16.8 172.2 Q18 171.3 19.2 172.3 L25.3 177.2"/>
  <circle cx="21.2" cy="169.1" r="1.3" fill="#f4f4f4" stroke="none"/>
  <path d="M18.5 162.5 Q19 160.9 20.8 160.8 L27.8 160.6 Q31 160.7 31.2 163.8 L30.9 170.6 Q30.8 172.6 29.7 173.2"/>
  <!-- X -->
  <path d="M887 21.3 L898.2 31.6 M898.2 21.3 L887 31.6" stroke-width="1.6"/>
  <!-- copy header 1106.9-1125.9 x 15.5-35 -->
  <rect x="1107.8" y="22.4" width="12" height="11.8" rx="3.2"/>
  <path d="M1113 19.8 Q1113 16.4 1116.4 16.4 H1121.6 Q1125 16.4 1125 19.8 V25.2 Q1125 28.6 1122.2 28.7"/>
  <!-- upload -->
  <path d="M1158 29 V18.4 M1153.6 22.4 L1158 18 L1162.4 22.4"/>
  <path d="M1150.5 29.2 V30.6 Q1150.5 33.2 1153.1 33.2 H1162.9 Q1165.5 33.2 1165.5 30.6 V29.2"/>
  <!-- history -->
  <path d="M1192.6 20.6 A8.3 8.3 0 1 1 1191.2 27.6"/>
  <path d="M1191.7 16.6 V21.2 H1196.4"/>
  <path d="M1199.8 20.8 V25.6 Q1199.6 27.2 1197.6 28.6"/>
  <!-- action copy 99.3-118.2 x 704.7-724.2 -->
  <rect x="100.2" y="710.9" width="12.4" height="12.4" rx="3.3"/>
  <path d="M105.5 708.2 Q105.5 705.6 108.9 705.6 H114 Q117.3 705.6 117.3 709 V714.4 Q117.3 717.8 114.6 717.9"/>
  <!-- thumbs up: centre 145.75,714.6 -->
  <g id="thumb" transform="translate(145.75 714.6)">
    <path d="M-4.2 -0.8 L-0.6 -7.6 Q0.3 -9.2 1.9 -8.4 Q3.6 -7.4 3.0 -5.4 L2.2 -2.4 H5.6 Q8.1 -2.4 7.6 0.2 L6.5 6.4 Q6.0 8.6 3.8 8.6 H-4.2 Z"/>
    <path d="M-4.2 -0.8 H-6.7 Q-7.7 -0.8 -7.7 0.2 V7.6 Q-7.7 8.6 -6.7 8.6 H-4.2"/>
  </g>
  <g transform="translate(182.9 714.2) rotate(180)">
    <path d="M-4.2 -0.8 L-0.6 -7.6 Q0.3 -9.2 1.9 -8.4 Q3.6 -7.4 3.0 -5.4 L2.2 -2.4 H5.6 Q8.1 -2.4 7.6 0.2 L6.5 6.4 Q6.0 8.6 3.8 8.6 H-4.2 Z"/>
    <path d="M-4.2 -0.8 H-6.7 Q-7.7 -0.8 -7.7 0.2 V7.6 Q-7.7 8.6 -6.7 8.6 H-4.2"/>
  </g>
  <!-- doc icon -->
  <path d="M105 467 H110.6 Q112 467 113 468 L115 470 Q116 471 116 472.4 V480.2 Q116 483.7 112.5 483.7 H105 Q101.5 483.7 101.5 480.2 V470.5 Q101.5 467 105 467 Z" stroke-width="1.7"/>
  <path d="M105.6 472.8 H112 M105.6 476.6 H110.4" stroke-width="1.7"/>
</g>
<!-- dots -->
<g fill="#f4f4f4">
  <circle cx="824.6" cy="26" r="1.75"/><circle cx="831.5" cy="26" r="1.75"/><circle cx="838.4" cy="26" r="1.75"/>
  <circle cx="1234.6" cy="25.8" r="1.75"/><circle cx="1241.3" cy="25.8" r="1.75"/><circle cx="1248" cy="25.8" r="1.75"/>
  <circle cx="213.5" cy="715" r="1.65"/><circle cx="220" cy="715" r="1.65"/><circle cx="226.4" cy="715" r="1.65"/>
</g>
<!-- chevrons -->
<g fill="none" stroke="#a6a6a6" stroke-width="1.7" stroke-linecap="round" stroke-linejoin="round">
  <path d="M262.6 24.4 L267.5 29.3 L272.4 24.4"/>
  <path d="M1067.4 24.2 L1072.4 29.2 L1077.4 24.2"/>
  <!-- small arrow & code icon bottom -->
  <path d="M475.6 823.4 H482 M478.4 819.6 L482.4 823.4 L478.4 827.2" stroke="#9a9a9a" stroke-width="1.8"/>
  <path d="M505.4 819.4 L502.2 822.9 L505.4 826.4 M515.8 819.4 L519 822.9 L515.8 826.4 M512.2 819 L509 826.8" stroke="#c4c4c4" stroke-width="2"/>
</g>
<!-- circle btn -->
<circle cx="457.1" cy="821.3" r="17.9" fill="#1c1c1c" stroke="#484848" stroke-width="1.2"/>
<path d="M457.4 814 V829 M450.8 822.6 L457.4 829.2 L464 822.6" fill="none" stroke="#f4f4f4" stroke-width="1.9" stroke-linecap="round" stroke-linejoin="round"/>
<!-- play -->
<path d="M1284.2 20.4 Q1284.2 19 1285.5 19.8 L1294.6 25.3 Q1295.6 26 1294.6 26.7 L1285.5 32.2 Q1284.2 33 1284.2 31.6 Z" fill="#0d0d0d"/>
<!-- red arrow -->
<path d="M1208.8 146.8 L1313 62" stroke="#fb1418" stroke-width="3.1" stroke-linecap="round" fill="none"/>
<path d="M1323.8 53.2 L1308.4 59.6 L1312.6 62.6 L1315.2 67 Z" fill="#fb1418"/>
<!-- scrollbar arrows -->
<path d="M1531.4 69 L1536 62.6 L1540.6 69 Z" fill="#9c9c9c"/>
<path d="M848 69.4 L853 62.4 L858 69.4 Z" fill="#363636"/>
<rect x="848" y="76.6" width="10" height="20" rx="5" fill="#353535"/>
</svg>


<!-- code -->
<div class="cl" style="top:75.6px"><span class="ln">1</span><span class="ct"><span class="g">&lt;!doctype html&gt;</span></span></div>
<div class="cl" style="top:98.3px"><span class="ln">2</span><svg class="fold" viewBox="0 0 14 8"><path d="M1.2 1.2 L7 6.8 L12.8 1.2"/></svg><span class="ct"><span class="w">&lt;</span><span class="tg">html</span><span class="w"> </span><span class="a">lang</span><span class="w">=</span><span class="s">"ru"</span><span class="w">&gt;</span></span></div>
<div class="cl" style="top:121.0px"><span class="ln">3</span><svg class="fold" viewBox="0 0 14 8"><path d="M1.2 1.2 L7 6.8 L12.8 1.2"/></svg><span class="ct"><span class="w">&lt;</span><span class="tg">head</span><span class="w">&gt;</span></span></div>
<div class="cl" style="top:143.7px"><span class="ln">4</span><span class="ct">  <span class="w">&lt;</span><span class="tg">meta</span><span class="w"> </span><span class="a">charset</span><span class="w">=</span><span class="s">"utf-8"</span><span class="w"> /&gt;</span></span></div>
<div class="cl" style="top:166.3px"><span class="ln">5</span><span class="ct">  <span class="w">&lt;</span><span class="tg">meta</span><span class="w"> </span><span class="a">name</span><span class="w">=</span><span class="s">"viewport"</span><span class="w"> </span><span class="a">content</span><span class="w">=</span><span class="s">"width=device-width, initial-scale=1" /&gt;</span></span></div>
<div class="cl" style="top:189.0px"><span class="ln">6</span><span class="ct">  <span class="w">&lt;</span><span class="tg">title</span><span class="w">&gt;Шторка До/После — Aspro style&lt;/</span><span class="tg">title</span><span class="w">&gt;</span></span></div>
<div class="cl" style="top:211.7px"><span class="ln">7</span><svg class="fold" viewBox="0 0 14 8"><path d="M1.2 1.2 L7 6.8 L12.8 1.2"/></svg><span class="ct">  <span class="w">&lt;</span><span class="tg">style</span><span class="w">&gt;</span></span></div>
<div class="cl" style="top:234.3px"><span class="ln">8</span><svg class="fold" viewBox="0 0 14 8"><path d="M1.2 1.2 L7 6.8 L12.8 1.2"/></svg><span class="ct">    <span class="w">:</span><span class="r">root</span><span class="w"> {</span></span></div>
<div class="cl" style="top:257.0px"><span class="ln">9</span><span class="ct">      <span class="w">--asp-primary: </span><span class="u">#2F6BFF</span><span class="w">;</span></span></div>
<div class="cl" style="top:279.7px"><span class="ln">10</span><span class="ct">      <span class="w">--asp-bg: </span><span class="u">#F6F8FC</span><span class="w">;</span></span></div>
<div class="cl" style="top:302.3px"><span class="ln">11</span><span class="ct">      <span class="w">--asp-border: </span><span class="u">#E7ECF5</span><span class="w">;</span></span></div>
<div class="cl" style="top:325.0px"><span class="ln">12</span><span class="ct">      <span class="w">--asp-shadow: </span><span class="n">0</span><span class="w"> </span><span class="n">10</span><span class="u">px</span><span class="w"> </span><span class="n">30</span><span class="u">px</span><span class="w"> </span><span class="u">rgba</span><span class="w">(</span><span class="n">15</span><span class="w">, </span><span class="n">23</span><span class="w">, </span><span class="n">42</span><span class="w">, </span><span class="n">.06</span><span class="w">);</span></span></div>
<div class="cl" style="top:347.7px"><span class="ln">13</span><span class="ct">    <span class="w">}</span></span></div>
<div class="cl" style="top:370.4px"><span class="ln">14</span><span class="ct"></span></div>
<div class="cl" style="top:393.0px"><span class="ln">15</span><span class="ct">    <span class="g">/* Центровка блока */</span></span></div>
<div class="cl" style="top:415.7px"><span class="ln">16</span><svg class="fold" viewBox="0 0 14 8"><path d="M1.2 1.2 L7 6.8 L12.8 1.2"/></svg><span class="ct">    <span class="w">.</span><span class="r">ba-wrap</span><span class="w"> {</span></span></div>
<div class="cl" style="top:438.4px"><span class="ln">17</span><span class="ct">      <span class="g">/* Контейнер как в калькуляторе: без флекса, центр через margin */</span></span></div>
<div class="cl" style="top:461.0px"><span class="ln">18</span><span class="ct">      <span class="a">width</span><span class="w">: </span><span class="n">100</span><span class="u">%</span><span class="w">;</span></span></div>
<div class="cl" style="top:483.7px"><span class="ln">19</span><span class="ct">      <span class="a">max-width</span><span class="w">: </span><span class="u">var</span><span class="w">(--aspro-container, </span><span class="n">1223.98</span><span class="u">px</span><span class="w">);</span></span></div>
<div class="cl" style="top:506.4px"><span class="ln">20</span><span class="ct">      <span class="a">margin</span><span class="w">: </span><span class="n">12</span><span class="u">px</span><span class="w"> </span><span class="a">auto</span><span class="w"> </span><span class="n">0</span><span class="w">; </span><span class="g">/* меньше отступ после заголовка */</span></span></div>
<div class="cl" style="top:529.0px"><span class="ln">21</span><span class="ct">      <span class="a">padding-inline</span><span class="w">: </span><span class="n">16</span><span class="u">px</span><span class="w">;</span></span></div>
<div class="cl" style="top:551.7px"><span class="ln">22</span><span class="ct">      <span class="a">box-sizing</span><span class="w">: </span><span class="a">border-box</span><span class="w">;</span></span></div>
<div class="cl" style="top:574.4px"><span class="ln">23</span><span class="ct">    <span class="w">}</span></span></div>
<div class="cl" style="top:597.1px"><span class="ln">24</span><span class="ct"></span></div>
<div class="cl" style="top:619.7px"><span class="ln">25</span><svg class="fold" viewBox="0 0 14 8"><path d="M1.2 1.2 L7 6.8 L12.8 1.2"/></svg><span class="ct">    <span class="w">.</span><span class="r">ba</span><span class="w"> {</span></span></div>
<div class="cl" style="top:642.4px"><span class="ln">26</span><span class="ct">      <span class="a">max-width</span><span class="w">: </span><span class="n">100</span><span class="u">%</span><span class="w">;</span></span></div>
<div class="cl" style="top:665.1px"><span class="ln">27</span><span class="ct">      <span class="a">width</span><span class="w">: </span><span class="n">100</span><span class="u">%</span><span class="w">;</span></span></div>
<div class="cl" style="top:687.7px"><span class="ln">28</span><span class="ct">      <span class="a">margin</span><span class="w">: </span><span class="n">0</span><span class="w"> </span><span class="a">auto</span><span class="w">; </span><span class="g">/* центрируем сам блок */</span></span></div>
<div class="cl" style="top:710.4px"><span class="ln">29</span><span class="ct">      <span class="a">min-width</span><span class="w">: </span><span class="n">0</span><span class="w">;</span></span></div>
<div class="cl" style="top:733.1px"><span class="ln">30</span><span class="ct"></span></div>
<div class="cl" style="top:755.7px"><span class="ln">31</span><span class="ct">      <span class="w">--pos: </span><span class="n">50</span><span class="w">;</span></span></div>
<div class="cl" style="top:778.4px"><span class="ln">32</span><span class="ct">      <span class="w">--handle-size: </span><span class="n">48</span><span class="u">px</span><span class="w">;</span></span></div>
<div class="cl" style="top:801.1px"><span class="ln">33</span><span class="ct">      <span class="w">--track-height: </span><span class="n">2</span><span class="u">px</span><span class="w">;</span></span></div>
<div class="cl" style="top:823.8px"><span class="ln">34</span><span class="ct">      <span class="w">--radius: </span><span class="n">20</span><span class="u">px</span><span class="w">;</span></span></div>
<div class="cl" style="top:846.4px"><span class="ln">35</span><span class="ct"></span></div>

</body>
</html>
